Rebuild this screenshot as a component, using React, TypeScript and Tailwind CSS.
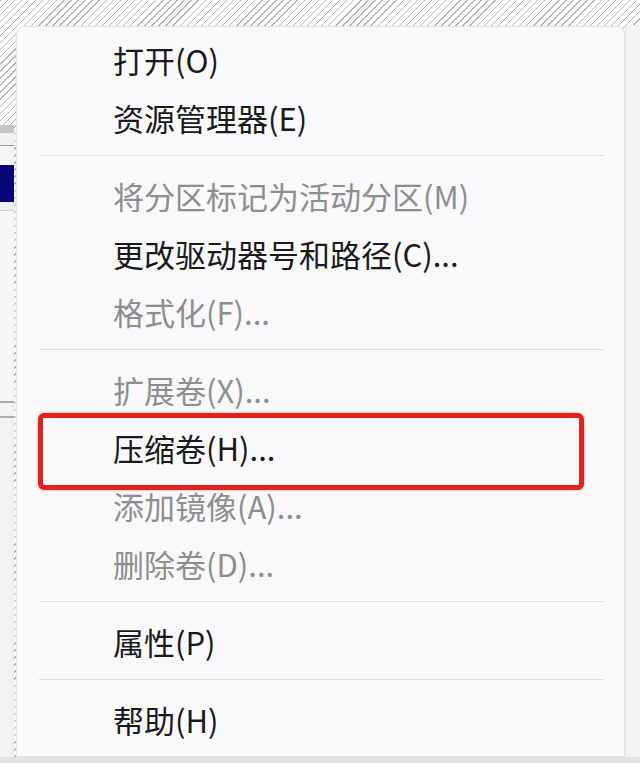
import React from 'react';

type Item = { label: string; disabled?: boolean; highlight?: boolean } | 'sep';

const items: Item[] = [
  { label: '打开(O)' },
  { label: '资源管理器(E)' },
  'sep',
  { label: '将分区标记为活动分区(M)', disabled: true },
  { label: '更改驱动器号和路径(C)...' },
  { label: '格式化(F)...', disabled: true },
  'sep',
  { label: '扩展卷(X)...', disabled: true },
  { label: '压缩卷(H)...', highlight: true },
  { label: '添加镜像(A)...', disabled: true },
  { label: '删除卷(D)...', disabled: true },
  'sep',
  { label: '属性(P)' },
  'sep',
  { label: '帮助(H)' },
];

const hatch =
  'bg-[repeating-linear-gradient(135deg,#b4b4b4_0px,#b4b4b4_1px,#ffffff_1px,#ffffff_5px)]';

export default function App() {
  return (
    <div
      className={`w-[640px] h-[763px] flex flex-col overflow-hidden ${hatch}`}
      style={{ fontFamily: '"Noto Sans CJK SC", "Noto Sans", sans-serif' }}
    >
      <div className="flex-1 flex">
        {/* window behind the menu, left edge */}
        <div className="w-[16px] flex flex-col">
          <div className="h-[125px]" />
          <div className="h-[8px] bg-[#c6c6c6] mr-[2px]" />
          <div className="h-[12px] bg-[#f2f2f2] mr-[2px]" />
          <div className="h-[1px] bg-[#9a9a9a] mr-[2px]" />
          <div className="h-[19px] bg-[#f6f6f6] mr-[2px]" />
          <div className="h-[37px] bg-[#06067a] mr-[2px]" />
          <div className="h-[8px] bg-[#f1f1f1] mr-[2px]" />
          <div className="h-[1px] bg-[#cfcfcf] mr-[2px]" />
          <div className="h-[190px] bg-[#f7f7f9] mr-[2px]" />
          <div className="h-[2px] bg-[#a8a8a8] mr-[2px]" />
          <div className="h-[13px] bg-[#f4f4f4] mr-[2px]" />
          <div className="h-[2px] bg-[#b0b0b0] mr-[2px]" />
          <div className="flex-1 bg-[#f3f3f5] mr-[2px]" />
        </div>

        {/* context menu */}
        <div className="flex-1 flex flex-col pt-[26px]">
          <div className="flex-1 bg-[#f9f9fb] rounded-t-lg border border-[#e2e2e6] shadow-[0_2px_8px_rgba(0,0,0,0.08)] pt-[6px]">
            {items.map((it, i) =>
              it === 'sep' ? (
                <div key={i} className="h-[20px] pt-[6px] ml-[22px] mr-[20px]">
                  <div className="h-[1px] bg-[#dcdce0]" />
                </div>
              ) : (
                <div
                  key={i}
                  className={`relative h-[58px] leading-[54px] pl-[96px] text-[31px] whitespace-nowrap ${
                    it.disabled ? 'text-[#8e8e8e]' : 'text-[#1a1a1a]'
                  }`}
                >
                  {it.label}
                  {it.highlight && (
                    <div className="absolute -top-[8px] -bottom-[11px] left-[21px] right-[40px] border-[5px] border-[#e3221c] rounded-md shadow-[0_0_3px_rgba(227,34,28,0.4)]" />
                  )}
                </div>
              )
            )}
          </div>
        </div>

        {/* right edge */}
        <div className="w-[15px] flex flex-col">
          <div className="h-[25px]" />
          <div className="flex-1 bg-[#f3f3f5] border-l border-[#e8e8ec]" />
        </div>
      </div>
      <div className="h-[6px] bg-[#e2e2e4]" />
    </div>
  );
}
